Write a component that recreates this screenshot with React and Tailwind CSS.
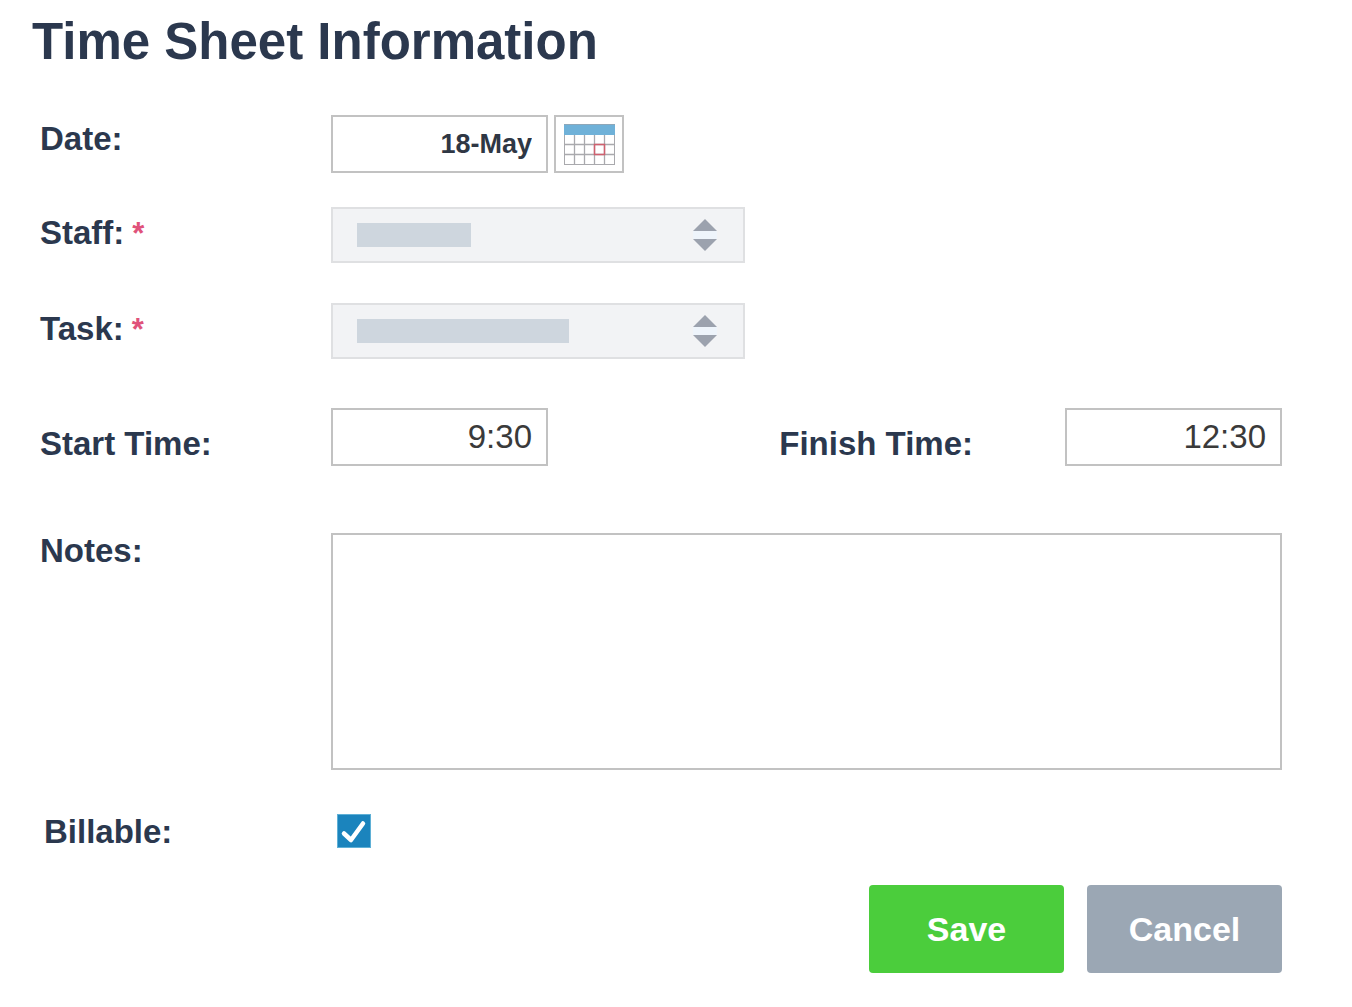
import React from 'react';

const labelClass = 'shrink-0 text-[33px] leading-9 font-bold text-[#2b384e]';
const inputClass = 'w-[217px] h-[58px] border-2 border-[#c2c2c2] bg-white px-3.5 text-right outline-none';

const CalendarIcon = () => (
  <svg width="51" height="42" viewBox="0 0 51 42" fill="none" aria-hidden="true">
    <rect x="0.5" y="1.5" width="50" height="40" fill="#fff" stroke="#a9a9ad" />
    <rect x="0" y="1" width="51" height="11" fill="#6fb1d8" />
    <path d="M0 1.5H51" stroke="#8ea7b8" />
    <path
      d="M0 21.5H51M0 31.5H51M10.5 12V42M20.5 12V42M30.5 12V42M40.5 12V42"
      stroke="#a9a9ad"
      strokeWidth="1.3"
    />
    <rect x="30.5" y="21.5" width="10" height="10" stroke="#cf5f6e" strokeWidth="1.5" />
  </svg>
);

const SelectArrows = () => (
  <svg
    className="absolute right-7 top-1/2 -translate-y-1/2 pointer-events-none"
    width="24"
    height="32"
    viewBox="0 0 24 32"
    aria-hidden="true"
  >
    <rect x="0" y="12" width="24" height="8" fill="#eef4fb" />
    <path d="M12 0L24 12H0Z" fill="#9ca2ae" />
    <path d="M12 32L0 20H24Z" fill="#9ca2ae" />
  </svg>
);

const SelectField = ({ id, barClass }) => (
  <div className="relative w-[414px] h-14">
    <select id={id} className="w-full h-full appearance-none border-2 border-[#dfe0e2] bg-[#f2f3f5] outline-none">
      <option value=""></option>
    </select>
    <span className={`absolute left-[26px] top-1/2 -translate-y-1/2 h-6 bg-[#ced6de] pointer-events-none ${barClass}`} />
    <SelectArrows />
  </div>
);

const Row = ({ className = '', label, htmlFor, labelPad = '', required, children }) => (
  <div className={`flex items-start ${className}`}>
    <label htmlFor={htmlFor} className={`${labelClass} w-[291px] ${labelPad}`}>
      {label}
      {required && <span className="ml-2 text-[31px] leading-none text-[#e0527a]">*</span>}
    </label>
    {children}
  </div>
);

const App = () => {
  return (
    <main className="min-h-screen bg-white pt-3 pb-8 pl-10 pr-[70px] font-['Liberation_Sans',Arial,sans-serif]">
      <h1 className="-ml-2 text-[51px] leading-[60px] font-bold text-[#2b384e]">Time Sheet Information</h1>

      <form onSubmit={(e) => e.preventDefault()}>
        <Row className="mt-[43px]" label="Date:" htmlFor="date" labelPad="pt-1.5">
          <input id="date" type="text" defaultValue="18-May" className={`${inputClass} text-[27px] font-bold text-[#2f3744]`} />
          <button
            type="button"
            aria-label="Open calendar"
            className="ml-1.5 w-[70px] h-[58px] flex items-center justify-center border-2 border-[#c2c2c2] bg-white"
          >
            <CalendarIcon />
          </button>
        </Row>

        <Row className="mt-[34px]" label="Staff:" htmlFor="staff" labelPad="pt-2" required>
          <SelectField id="staff" barClass="w-[114px]" />
        </Row>

        <Row className="mt-10" label="Task:" htmlFor="task" labelPad="pt-2" required>
          <SelectField id="task" barClass="w-[212px]" />
        </Row>

        <Row className="mt-[49px]" label="Start Time:" htmlFor="start" labelPad="pt-[18px]">
          <input id="start" type="text" defaultValue="9:30" className={`${inputClass} text-[33px] text-[#3a3a3a]`} />
          <div className="ml-auto flex items-start gap-[92px]">
            <label htmlFor="finish" className={`${labelClass} pt-[18px]`}>Finish Time:</label>
            <input id="finish" type="text" defaultValue="12:30" className={`${inputClass} text-[33px] text-[#3a3a3a]`} />
          </div>
        </Row>

        <Row className="mt-[67px]" label="Notes:" htmlFor="notes">
          <textarea id="notes" className="block flex-1 min-w-0 h-[237px] resize-none border-2 border-[#c2c2c2] bg-white p-3.5 text-[27px] outline-none" />
        </Row>

        <Row className="mt-11 pl-1" label="Billable:" htmlFor="billable">
          <span className="relative ml-0.5 w-[34px] h-[34px]">
            <input
              id="billable"
              type="checkbox"
              defaultChecked
              className="peer block w-full h-full appearance-none border border-[#5fb0d6] bg-white checked:bg-[#1b84bd]"
            />
            <svg
              className="absolute inset-0 hidden peer-checked:block pointer-events-none"
              width="34"
              height="34"
              viewBox="0 0 34 34"
              fill="none"
              aria-hidden="true"
            >
              <path d="M7 19.5L14 26L26 9.5" stroke="#fff" strokeWidth="4.5" strokeLinecap="round" strokeLinejoin="round" />
            </svg>
          </span>
        </Row>

        <div className="mt-[35px] flex justify-end gap-[23px] text-[34px] font-bold text-white">
          <button type="submit" className="w-[195px] h-[88px] rounded bg-[#4bcd3c]">Save</button>
          <button type="button" className="w-[195px] h-[88px] rounded bg-[#9ba7b4]">Cancel</button>
        </div>
      </form>
    </main>
  );
};

export default App;
